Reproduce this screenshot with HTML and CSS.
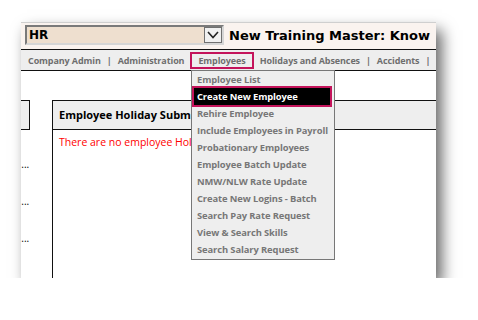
FILE: index.html
```html
<!DOCTYPE html>
<html>
<head>
<meta charset="utf-8">
<link rel="stylesheet" href="styles.css">
</head>
<body>
<div class="frame">
  <div class="header">
    <div class="select">
      <span class="select-text">HR</span>
      <span class="select-btn"><svg width="14" height="10" viewBox="0 0 14 10"><path d="M2 2 L7 7.5 L12 2" fill="none" stroke="#222" stroke-width="1.6"/></svg></span>
    </div>
    <div class="title">New Training Master: Know</div>
  </div>
  <div class="nav">
    <span class="nav-item">Company Admin</span><span class="sep">|</span><span class="nav-item">Administration</span><span class="nav-item active">Employees</span><span class="nav-item">Holidays and Absences</span><span class="sep">|</span><span class="nav-item">Accidents</span><span class="sep">|</span><span class="nav-item">Appraisals</span>
  </div>
  <div class="content">
    <div class="left-col">
      <div class="stub"></div>
      <div class="dots d1">...</div>
      <div class="dots">...</div>
      <div class="dots">...</div>
    </div>
    <div class="panel">
      <div class="panel-head">Employee Holiday Submissions</div>
      <div class="panel-msg">There are no employee Holiday Submissions</div>
    </div>
    <div class="menu">
      <div class="menu-item">Employee List</div>
      <div class="menu-item hl">Create New Employee</div>
      <div class="menu-item">Rehire Employee</div>
      <div class="menu-item">Include Employees in Payroll</div>
      <div class="menu-item">Probationary Employees</div>
      <div class="menu-item">Employee Batch Update</div>
      <div class="menu-item">NMW/NLW Rate Update</div>
      <div class="menu-item">Create New Logins - Batch</div>
      <div class="menu-item">Search Pay Rate Request</div>
      <div class="menu-item">View &amp; Search Skills</div>
      <div class="menu-item">Search Salary Request</div>
    </div>
  </div>
</div>
</body>
</html>
```

FILE: styles.css
```css
html, body {
  margin: 0;
  padding: 0;
  background: #ffffff;
}
.frame {
  margin: 22px 0 0 21px;
  width: 415px;
  height: 256px;
  overflow: hidden;
  background: #ffffff;
  box-shadow: 6px 8px 14px rgba(0, 0, 0, 0.6);
  display: flex;
  flex-direction: column;
  border-top: 1px solid #cfcfcf;
  box-sizing: border-box;
}
.header {
  height: 27px;
  flex: none;
  background: #faf3ef;
  display: flex;
  align-items: flex-start;
  padding: 2px 0 0 4px;
  box-sizing: border-box;
  border-bottom: 1px solid #111;
  white-space: nowrap;
}
.select {
  width: 199px;
  height: 20px;
  box-sizing: border-box;
  border: 2px solid #7a7a7a;
  border-right-color: #d6d6d6;
  border-bottom-color: #d6d6d6;
  background: #eedfcf;
  display: flex;
  align-items: center;
  justify-content: space-between;
  flex: none;
}
.select-text {
  font-family: "DejaVu Sans", sans-serif;
  font-weight: bold;
  font-size: 12px;
  color: #000;
  padding-left: 2px;
}
.select-btn {
  width: 18px;
  height: 16px;
  box-sizing: border-box;
  border: 1px solid #707070;
  background: #f0f0f0;
  display: flex;
  align-items: center;
  justify-content: center;
}
.title {
  font-family: "DejaVu Sans", sans-serif;
  font-weight: bold;
  font-size: 13px;
  color: #000;
  margin-left: 5px;
  line-height: 21px;
}
.nav {
  height: 21px;
  flex: none;
  background: #eeeeee;
  border-bottom: 1px solid #111;
  box-sizing: border-box;
  display: flex;
  align-items: center;
  padding-left: 7px;
  white-space: nowrap;
  font-family: "Open Sans", sans-serif;
  font-weight: 700;
  font-size: 9px;
  letter-spacing: -0.1px;
  color: #6e6e6e;
}
.sep {
  margin: 0 6px;
}
.nav-item.active {
  border: 2px solid #c4145b;
  padding: 0 6px;
  margin: 0 6px;
  height: 17px;
  box-sizing: border-box;
  display: flex;
  align-items: center;
}
.content {
  flex: 1;
  position: relative;
  display: flex;
  align-items: flex-start;
}
.left-col {
  width: 9px;
  flex: none;
  display: flex;
  flex-direction: column;
}
.stub {
  height: 30px;
  margin-top: 29px;
  box-sizing: border-box;
  border: 1px solid #111;
  border-left: none;
  background: #eeeeee;
}
.dots {
  font-family: "DejaVu Sans", sans-serif;
  font-size: 10px;
  line-height: 10px;
  color: #111;
  margin-top: 27px;
  letter-spacing: -0.5px;
}
.dots.d1 {
  margin-top: 30px;
}
.panel {
  margin-left: 22px;
  margin-top: 29px;
  flex: none;
  width: 420px;
  height: 300px;
  border-left: 1px solid #111;
  border-top: 1px solid #111;
  box-sizing: border-box;
}
.panel-head {
  height: 29px;
  box-sizing: border-box;
  border-bottom: 1px solid #111;
  background: #eeeeee;
  font-family: "Open Sans", sans-serif;
  font-weight: bold;
  font-size: 11px;
  color: #000;
  padding-left: 6px;
  line-height: 28px;
  white-space: nowrap;
}
.panel-msg {
  font-family: "Open Sans", sans-serif;
  font-size: 10.5px;
  color: #ff0000;
  padding-left: 6px;
  margin-top: 5px;
  white-space: nowrap;
}
.menu {
  position: absolute;
  left: 170px;
  top: -1px;
  width: 144px;
  box-sizing: border-box;
  border: 1px solid #777;
  background: #eeeeee;
  padding: 0 0 1px 0;
  font-family: "Open Sans", sans-serif;
  font-weight: 700;
  font-size: 9.4px;
  letter-spacing: -0.1px;
  color: #777777;
}
.menu-item {
  height: 17px;
  line-height: 17px;
  padding-left: 5px;
  white-space: nowrap;
}
.menu-item.hl {
  position: relative;
  box-sizing: border-box;
  margin: -2px 2px -2px 0;
  height: 21px;
  border: 2px solid #c4145b;
  background: #000;
  color: #fff;
  padding-left: 3px;
}
```
